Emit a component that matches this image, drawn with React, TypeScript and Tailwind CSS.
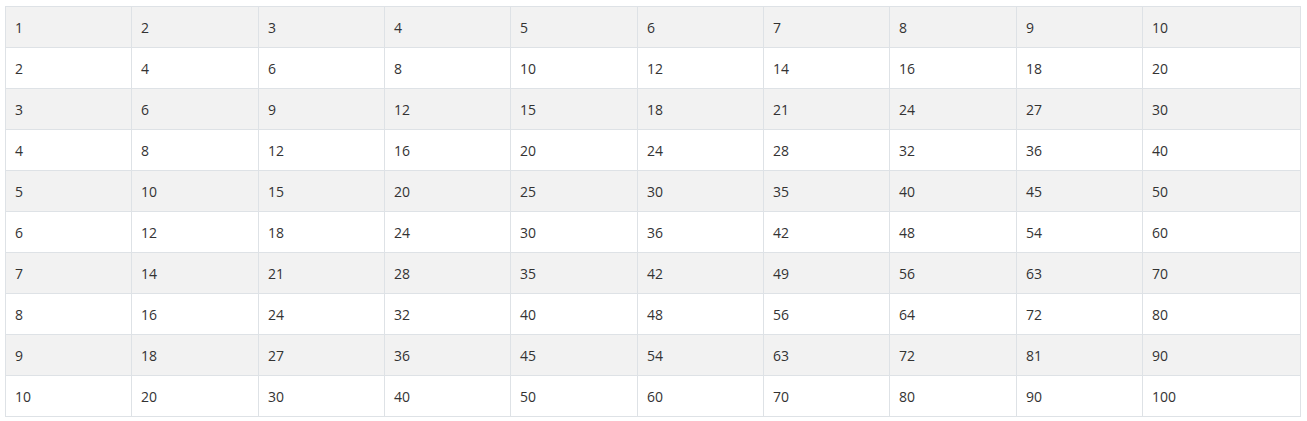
import React from "react";

const widths = [126, 127, 126, 126, 127, 126, 126, 127, 126, 158];

export default function App() {
  const rows = Array.from({ length: 10 }, (_, i) => i + 1);
  return (
    <div className="bg-white w-[1307px] h-[421px] pt-[6px] pl-[5px]" style={{ fontFamily: '"Open Sans", "Noto Sans", sans-serif' }}>
      <table className="table-fixed border-collapse w-[1295px] text-[14px] text-[#333333]">
        <colgroup>
          {widths.map((w, i) => (
            <col key={i} style={{ width: w }} />
          ))}
        </colgroup>
        <tbody>
          {rows.map((r) => (
            <tr key={r} className={r % 2 === 1 ? "bg-[#f2f2f2]" : "bg-white"}>
              {rows.map((c) => (
                <td key={c} className="border border-[#dee2e6] h-[41px] pl-[9px] pr-[8px] pt-[2px] pb-0 align-middle leading-[20px]">
                  {r * c}
                </td>
              ))}
            </tr>
          ))}
        </tbody>
      </table>
    </div>
  );
}
